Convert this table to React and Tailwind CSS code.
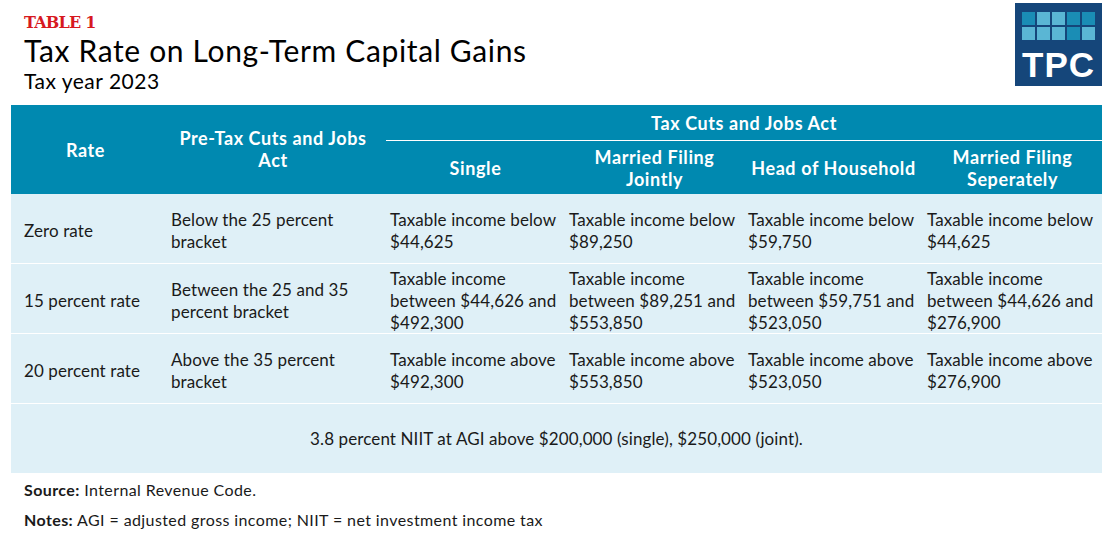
import React from "react";

const body = "font-['Lato','Noto_Sans',sans-serif]";

function Lines({ lines }) {
  return (
    <div className="flex flex-col">
      {lines.map((l, i) => (
        <span key={i} className="whitespace-nowrap">{l}</span>
      ))}
    </div>
  );
}

const rows = [
  {
    rate: "Zero rate",
    pre: ["Below the 25 percent", "bracket"],
    cells: [
      ["Taxable income below", "$44,625"],
      ["Taxable income below", "$89,250"],
      ["Taxable income below", "$59,750"],
      ["Taxable income below", "$44,625"],
    ],
  },
  {
    rate: "15 percent rate",
    pre: ["Between the 25 and 35", "percent bracket"],
    cells: [
      ["Taxable income", "between $44,626 and", "$492,300"],
      ["Taxable income", "between $89,251 and", "$553,850"],
      ["Taxable income", "between $59,751 and", "$523,050"],
      ["Taxable income", "between $44,626 and", "$276,900"],
    ],
  },
  {
    rate: "20 percent rate",
    pre: ["Above the 35 percent", "bracket"],
    cells: [
      ["Taxable income above", "$492,300"],
      ["Taxable income above", "$553,850"],
      ["Taxable income above", "$523,050"],
      ["Taxable income above", "$276,900"],
    ],
  },
];

function Logo() {
  const row1 = ["#1a8db5", "#5ab6d4", "#5ab6d4", "#1a8db5", "#1a8db5"];
  const row2 = ["#5ab6d4", "#5ab6d4", "#5ab6d4", "#1a8db5", "#5ab6d4"];
  return (
    <div className="w-[87px] h-[83px] bg-[#15467a] flex flex-col items-center pt-[9px]">
      <div className="grid grid-cols-5 gap-[2px]">
        {row1.map((c, i) => (
          <div key={"a" + i} className="w-[13px] h-[13px]" style={{ background: c }} />
        ))}
        {row2.map((c, i) => (
          <div key={"b" + i} className="w-[13px] h-[13px]" style={{ background: c }} />
        ))}
      </div>
      <div className="text-white font-bold text-[35px] leading-none mt-[7px] tracking-[1px] font-['Liberation_Sans',sans-serif]">
        TPC
      </div>
    </div>
  );
}

export default function App() {
  return (
    <div className={`w-[1114px] h-[541px] bg-white relative ${body} text-[#1a1a1a]`}>
      <div className="flex justify-between pl-[24px] pr-[12px] pt-[3px] h-[96px]">
        <div className="pt-[10px]">
          <div className="text-[#d7191f] font-bold text-[16px] leading-[20px] font-['DejaVu_Serif',serif] tracking-[-0.8px]">
            TABLE 1
          </div>
          <div className="text-[30px] leading-[35px] tracking-[0.65px] text-black">Tax Rate on Long-Term Capital Gains</div>
          <div className="text-[21px] leading-[26px] tracking-[0.5px] text-black">Tax year 2023</div>
        </div>
        <Logo />
      </div>

      <div className="mx-[11px] mt-[9px] w-[1091px]">
        {/* header */}
        <div className="bg-[#0089b0] text-white font-bold text-[18px] leading-[22px] tracking-[0.6px] flex h-[89px]">
          <div className="w-[149px] flex items-center justify-center">Rate</div>
          <div className="w-[226px] flex items-center justify-center text-center pb-[2px]">
            <div>Pre-Tax Cuts and Jobs<br />Act</div>
          </div>
          <div className="flex-1 flex flex-col">
            <div className="h-[36px] flex items-center justify-center border-b border-white">
              Tax Cuts and Jobs Act
            </div>
            <div className="flex-1 grid grid-cols-4 text-center">
              <div className="flex items-center justify-center">Single</div>
              <div className="flex items-center justify-center">Married Filing<br />Jointly</div>
              <div className="flex items-center justify-center">Head of Household</div>
              <div className="flex items-center justify-center">Married Filing<br />Seperately</div>
            </div>
          </div>
        </div>
        {/* body */}
        <div className="bg-[#dff0f7] text-[17px] leading-[22px] tracking-[0.1px]">
          {rows.map((r, i) => (
            <div key={i} className="flex h-[70px] border-b border-white items-center pt-[4px]">
              <div className="w-[149px] pl-[13px]">{r.rate}</div>
              <div className="w-[226px] pl-[11px]">
                <Lines lines={r.pre} />
              </div>
              <div className="flex-1 grid grid-cols-4">
                {r.cells.map((c, j) => (
                  <div key={j} className="pl-[4px]">
                    <Lines lines={c} />
                  </div>
                ))}
              </div>
            </div>
          ))}
          <div className="h-[69px] flex items-center justify-center">
            3.8 percent NIIT at AGI above $200,000 (single), $250,000 (joint).
          </div>
        </div>
      </div>

      <div className="pl-[24px] pt-[2px] text-[16px] leading-[30px] tracking-[0.4px]">
        <div><span className="font-bold">Source:</span> Internal Revenue Code.</div>
        <div><span className="font-bold">Notes:</span> AGI = adjusted gross income; NIIT = net investment income tax</div>
      </div>
    </div>
  );
}
